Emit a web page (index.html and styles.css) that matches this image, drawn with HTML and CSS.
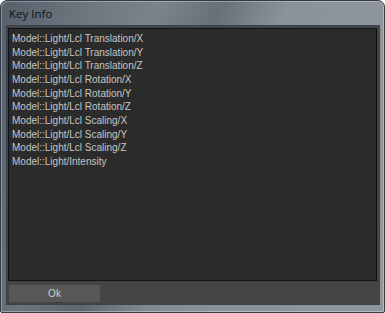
FILE: index.html
```html
<!DOCTYPE html>
<html>
<head>
<meta charset="utf-8">
<link rel="stylesheet" href="styles.css">
</head>
<body>
<div class="window">
  <div class="titlebar">Key Info</div>
  <div class="client">
    <div class="list">
      <div class="row">Model::Light/Lcl Translation/X</div>
      <div class="row">Model::Light/Lcl Translation/Y</div>
      <div class="row">Model::Light/Lcl Translation/Z</div>
      <div class="row">Model::Light/Lcl Rotation/X</div>
      <div class="row">Model::Light/Lcl Rotation/Y</div>
      <div class="row">Model::Light/Lcl Rotation/Z</div>
      <div class="row">Model::Light/Lcl Scaling/X</div>
      <div class="row">Model::Light/Lcl Scaling/Y</div>
      <div class="row">Model::Light/Lcl Scaling/Z</div>
      <div class="row">Model::Light/Intensity</div>
    </div>
    <div class="footer">
      <div class="button">Ok</div>
    </div>
  </div>
</div>
</body>
</html>
```
FILE: styles.css
```css
html, body {
  margin: 0;
  padding: 0;
  background: #ffffff;
}
.window {
  width: 385px;
  height: 313px;
  box-sizing: border-box;
  border: 1px solid #363c44;
  border-radius: 7px 7px 2px 2px;
  background:
    linear-gradient(115deg, rgba(0,0,0,0) 30%, rgba(30,40,50,0.28) 42%, rgba(0,0,0,0) 55%),
    linear-gradient(100deg, #55606b 0%, #6a757e 18%, #7f878e 40%, #8a9197 60%, #8f969c 100%);
  display: flex;
  flex-direction: column;
  padding: 0 4px 7px 5px;
  box-shadow: inset 1px 1px 0 rgba(255,255,255,0.3), inset -1px -1px 0 rgba(255,255,255,0.35);
}
.titlebar {
  height: 24px;
  flex: none;
  box-sizing: border-box;
  padding: 5px 0 0 3px;
  font-family: "Open Sans", "Liberation Sans", sans-serif;
  font-size: 11.5px;
  line-height: 16px;
  color: #0c1014;
}
.client {
  flex: 1;
  display: flex;
  flex-direction: column;
  background: #444444;
  border: 1px solid #3a4450;
  padding: 2px 2px 2px 1px;
  min-height: 0;
}
.list {
  flex: 1;
  background: #2b2b2b;
  border: 1px solid #121212;
  border-right-color: #0c0c0c;
  padding: 3px 3px;
  font-family: "Liberation Sans", Arial, sans-serif;
  font-size: 10px;
  line-height: 13.67px;
  color: #c6c6c6;
}
.row {
  white-space: nowrap;
}
.footer {
  flex: none;
  height: 21px;
  display: flex;
  align-items: flex-end;
  padding-left: 1px;
}
.button {
  width: 91px;
  height: 17px;
  background: #575757;
  color: #d2d2d2;
  font-family: "Liberation Sans", Arial, sans-serif;
  font-size: 10px;
  line-height: 17px;
  text-align: center;
}
```
